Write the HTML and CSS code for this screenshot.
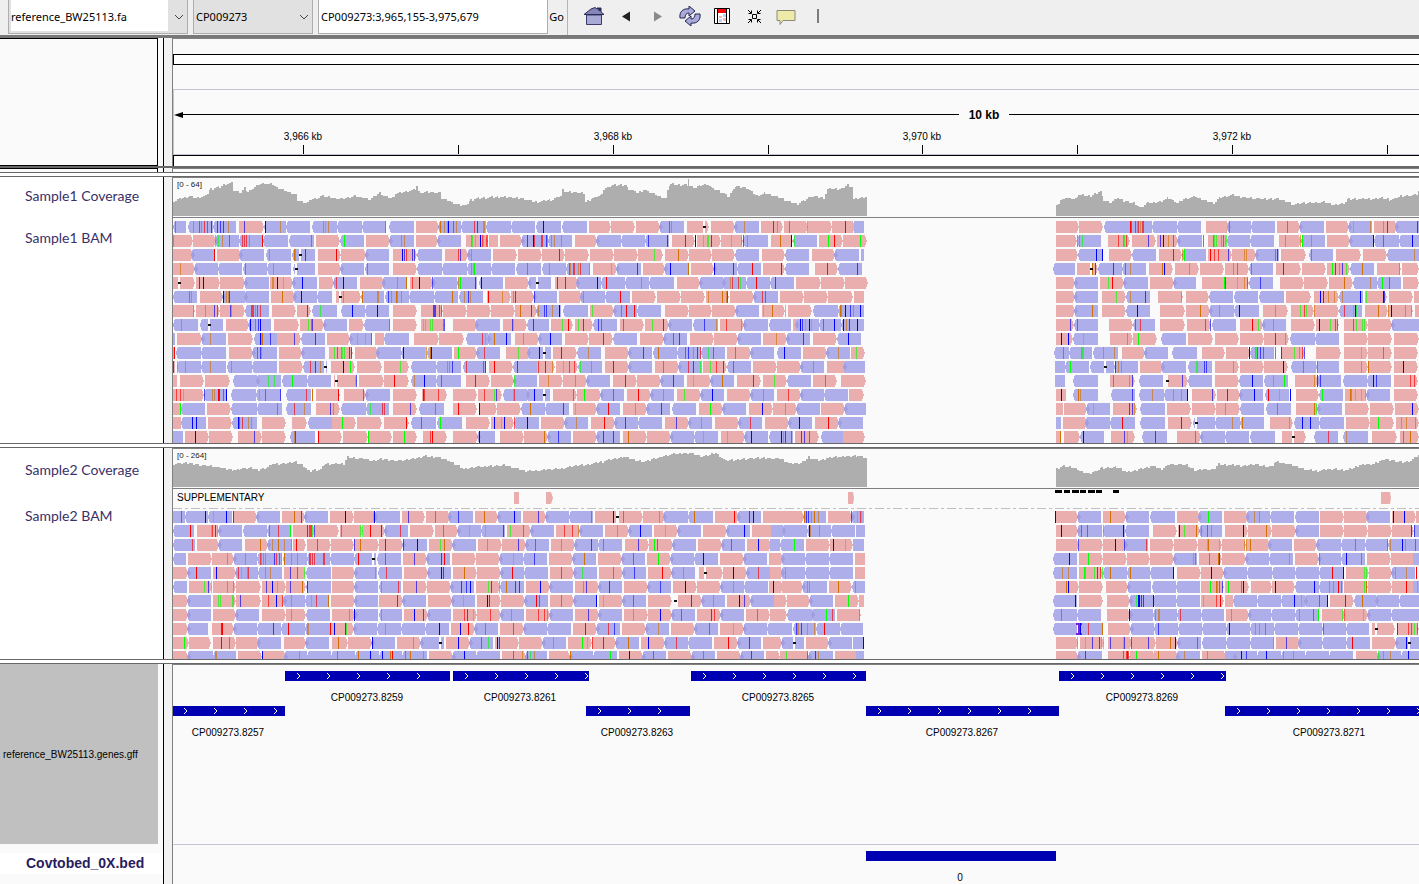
FILE: index.html
```html
<!DOCTYPE html>
<html lang="en">
<head>
<meta charset="utf-8">
<title>Genome viewer</title>
<link rel="stylesheet" href="styles.css">
</head>
<body>
<header class="toolbar">
  <div class="combo combo-genome">
    <select aria-label="Genome"><option>reference_BW25113.fa</option></select>
    <svg class="chev" width="10" height="6" viewBox="0 0 10 6"><path d="M1 1l4 4 4-4"/></svg>
  </div>
  <div class="combo combo-chrom">
    <select aria-label="Chromosome"><option>CP009273</option></select>
    <svg class="chev" width="10" height="6" viewBox="0 0 10 6"><path d="M1 1l4 4 4-4"/></svg>
  </div>
  <input class="locus" type="text" aria-label="Locus" value="CP009273:3,965,155-3,975,679">
  <button class="go" type="button">Go</button>
  <nav class="icons" aria-label="Tools">
    <button type="button" aria-label="Home"><svg width="22" height="20" viewBox="0 0 22 20"><path d="M3.500 9h15v9.500h-15z" fill="#a9a9d6" stroke="#3c3c6c"/><path d="M1 8.500L8 3l4-1.500 2 1.500V2h4v4l3 2.500z" fill="#8484b8" stroke="#2c2c58"/><path d="M14 2h4v3h-2z" fill="#2c2c58"/></svg></button>
    <button type="button" aria-label="Back"><svg width="22" height="20" viewBox="0 0 22 20"><path d="M7 10.500l8-5v10z" fill="#222"/></svg></button>
    <button type="button" aria-label="Forward"><svg width="22" height="20" viewBox="0 0 22 20"><path d="M15 10.500l-8-5v10z" fill="#8a8a8a"/></svg></button>
    <button type="button" aria-label="Refresh"><svg width="22" height="20" viewBox="0 0 22 20"><g fill="#a9a9dc" stroke="#26264e"><path d="M1 12C0 6 4 2 10 3V0l6 5-6 5V7C7 7 6 9 6 12z"/><path d="M21 8c1 6-3 10-9 9v3l-6-5 6-5v3c3 0 4-2 4-5z"/></g></svg></button>
    <button type="button" aria-label="Region of interest"><svg width="22" height="20" viewBox="0 0 22 20"><path d="M3.500 2.500h15v15h-15z" fill="#fff" stroke="#000"/><path d="M7 3h8v4H7z" fill="#f00"/><path d="M8 10h3v2H8zM12 12h3v3h-3z" fill="#f3b5b5"/><path d="M12 8h3v3h-3zM8 13h3v3H8z" fill="#c4cdf5"/><path d="M6.500 2v16M15.500 2v16" stroke="#000"/></svg></button>
    <button type="button" aria-label="Fit to window"><svg width="22" height="20" viewBox="0 0 22 20"><path d="M9.500 8.500h4v4h-4zM5 4l3 3M18 4l-3 3M5 17l3-3M18 17l-3-3M8.500 4.500v3h-3M14.500 4.500v3h3M8.500 16.500v-3h-3M14.500 16.500v-3h3" fill="none" stroke="#000"/></svg></button>
    <button type="button" aria-label="Popup text"><svg width="22" height="20" viewBox="0 0 22 20"><path d="M2 4.500h18v10H8l-3 4v-4H2z" fill="#eeeaa8" stroke="#8a8a7c"/></svg></button>
  </nav>
  <span class="bar"></span>
</header>
<main class="viewer">
  <section class="row row-header">
    <div class="names names-header"></div>
    <div class="strip"></div>
    <div class="data">
      <div class="ideogram"></div>
      <div class="ruler">
        <div class="span">
          <svg class="tip" width="10" height="6" viewBox="0 0 10 6"><path d="M0 3l6-2 3-1v6L6 5z"/></svg>
          <i class="rule"></i><b>10 kb</b><i class="rule"></i>
        </div>
        <svg class="chart ticks" id="ticks" height="26"></svg>
      </div>
      <div class="sequence"></div>
    </div>
  </section>
  <div class="split split-thick"></div>
  <section class="row row-attr">
    <div class="names names-attr"></div>
    <div class="strip"></div>
    <div class="data"></div>
  </section>
  <div class="split"></div>
  <section class="row row-one">
    <div class="names"><span class="name">Sample1 Coverage</span><span class="name">Sample1 BAM</span></div>
    <div class="strip"></div>
    <div class="data">
      <svg class="chart coverage" id="cov1" height="39"><text x="4" y="9">[0 - 64]</text></svg>
      <svg class="chart reads" id="reads1" height="226"></svg>
    </div>
  </section>
  <div class="split"></div>
  <section class="row row-two">
    <div class="names"><span class="name">Sample2 Coverage</span><span class="name">Sample2 BAM</span></div>
    <div class="strip"></div>
    <div class="data">
      <svg class="chart coverage" id="cov2" height="39"><text x="4" y="9">[0 - 264]</text></svg>
      <div class="supplementary"><span>SUPPLEMENTARY</span><svg class="chart supp" id="supp" height="20"></svg></div>
      <svg class="chart reads2" id="reads2" height="149"></svg>
    </div>
  </section>
  <div class="split"></div>
  <section class="row row-genes">
    <div class="names names-genes"><span class="file">reference_BW25113.genes.gff</span><span class="bed">Covtobed_0X.bed</span></div>
    <div class="strip"></div>
    <div class="data">
      <svg class="chart genes" id="genes" height="180"></svg>
      <svg class="chart" id="bed" height="39"><rect class="feature" x="693" y="6" width="190" height="10"/><text x="787" y="36" text-anchor="middle">0</text></svg>
    </div>
  </section>
</main>
<script src="tracks.js"></script>
</body>
</html>
```
FILE: styles.css
```css
* { box-sizing: border-box; }
body { margin: 0; min-height: 100vh; display: flex; flex-direction: column; background: #fafafa; font: 10px "Liberation Sans", Arial, sans-serif; color: #000; overflow: hidden; }
select, input, button { font: 11px "Noto Sans", sans-serif; color: #000; border-radius: 0; }

.toolbar { display: flex; align-items: stretch; height: 38px; padding: 0 0 0 8px; background: #efefef; border-bottom: 3px solid #787878; }
.combo { position: relative; margin: 0 5px 1px 0; }
.combo-genome { width: 180px; }
.combo-chrom { width: 120px; }
.combo select { width: 100%; height: 100%; padding: 0 2px; appearance: none; border: 1px solid #adadad; border-top: 0; background: #e1e1e1; }
.combo-genome select { background: linear-gradient(#fff, #fff) 2px 0 / 157px 31px no-repeat #e1e1e1; }
.chev { position: absolute; right: 4px; top: 14px; pointer-events: none; }
.chev path { fill: none; stroke: #444; }
.locus { width: 230px; margin: 0 0 1px; padding: 0 2px; border: 1px solid #adadad; border-top: 0; background: #fff; }
.go { width: 20px; padding: 0 2px 2px 0; border: 0; border-right: 1px solid #b4b4b4; background: #efefef; }
.icons { display: flex; margin-left: 10px; }
.icons button { width: 32px; padding: 0 0 3px; border: 0; background: none; display: flex; align-items: center; justify-content: center; }
.bar { width: 2px; height: 14px; margin: 9px 0 0 15px; background: #7c7c7c; }

.viewer { flex: 1; display: flex; flex-direction: column; }
.row { display: flex; }
.names { display: flex; flex-direction: column; width: 164px; flex: none; border-right: 1px solid #000; background: #fff; color: #3a3068; }
.strip { width: 8px; flex: none; background: #f2f2f2; }
.data { flex: 1; min-width: 0; overflow: hidden; border-left: 1px solid #808080; border-top: 1px solid #808080; }
.split { height: 5px; border: solid #686868; border-width: 1px 0; background: #fff; }
.split-thick { height: 2px; background: #686868; }

.names-header, .names-attr { padding-right: 5px; background: #fafafa; }
.names-header::before, .names-attr::before { content: ""; flex: 1; border: 1px solid #000; border-left: 0; }
.names-attr::before { border-bottom: 0; }
.row-header { height: 128px; }
.row-attr { height: 4px; }
.ideogram { height: 11px; margin-top: 15px; border: 1px solid #000; border-right: 0; background: #fff; }
.ruler { height: 66px; margin-top: 24px; border: solid #c4c4d4; border-width: 1px 0 1px 1px; }
.sequence { height: 11px; border: 1px solid #000; border-right: 0; border-bottom: 0; background: #fff; }
.span { display: flex; align-items: center; height: 39px; padding-top: 10px; font-size: 12px; }
.span .rule:first-of-type { flex: 0 0 776px; }
.rule { flex: 1; height: 1px; background: #000; }
.span b { flex: none; width: 50px; text-align: center; }
.tip { flex: none; margin-right: -1px; }

.chart { display: block; width: 100%; font: 10px "Liberation Sans", Arial, sans-serif; }
.ticks path { stroke: #000; }
.coverage { font-size: 8px; }
.coverage path { fill: #aeaeae; }
.coverage text { fill: #222; }
.reads { border-top: 1px solid #808080; }
.reads, .reads2 { shape-rendering: crispEdges; }
.fwd { fill: #ebaeae; }
.rev { fill: #aeaeeb; }
.overlap { fill: #9c96dc; opacity: .7; }
.base-a { fill: #0f0; }
.base-c { fill: #00f; }
.base-g { fill: #d17105; }
.base-t { fill: #f00; }
.weak { opacity: .65; }
.gap { fill: #fafafa; }
.ink { fill: #111; }
.insert { fill: #7a1ee0; }

.name { font: 14px/20px Lato, sans-serif; padding-left: 25px; }
.row-one .name:first-child { margin: 9px 0 22px; }
.row-two .name:first-child { margin: 12px 0 26px; }
.row-one { height: 266px; }
.row-two { height: 211px; }
.supplementary { display: flex; height: 21px; margin-bottom: 1px; border-top: 1px solid #808080; }
.supplementary span { flex: none; width: 100px; padding: 3px 0 0 4px; }
.supplementary .supp { flex: 1; width: auto; min-width: 0; overflow: visible; }
.dashes { stroke: #c0c0c0; stroke-dasharray: 9 3 3 3; }
.row-genes { flex: 1; }
.names-genes { background: #fafafa; }
.file { display: flex; align-items: center; width: 158px; height: 180px; padding-left: 3px; background: #c0c0c0; color: #000; }
.bed { margin-top: 9px; padding-left: 26px; background: #fff; font: bold 14px/21px "Liberation Sans", Arial, sans-serif; color: #281c60; }
.feature { fill: #0000b2; }
.arrows { fill: none; stroke: #fff; }
.genes { border-bottom: 1px solid #c4c4d4; }
```
FILE: tracks.js
```js
// Row notation: f/r start-end is a forward/reverse alignment, A C G T are
// mismatches (lower case: low base quality), D is a deletion, I an insertion.
const sample1 = [
`r0-13 G2 r15-40 g20 t26 g28 t31 t34 T38 r40-63 c44 c47 c50 g55 f66-91 c71 r91-113 C92 g107 r113-137 r139-164 g150 a152 g155 r164-189 r189-212 G212 r216-241 f243-266 r265-288 G267 g271 g274 C275 t280 g283 r288-313 t301 c304 g310 g311 r313-338 r338-362 r363-388 C370 r389-414 f416-438 f438-462 f463-487 r486-511 t496 g498 f514-536 D531 f538-562 r561-586 g571 f588-610 c600 g604 f611-635 G616 f635-659 g634 f659-682 T672 r681-691
f883-906 f906-930 r931-957 r957-979 T957 t958 t962 g964 t965 g967 t969 t970 r979-1004 r1004-1028 f1033-1056 r1054-1078 G1056 r1078-1102 f1104-1127 G1114 r1126-1151 f1153-1176 r1175-1199 a1180 g1197 f1201-1224 g1210 c1214 r1222-1246 T1244`,
`f0-20 A0 f20-43 r42-66 g42 a45 g49 t56 r66-90 t69 t71 t73 g76 T89 r90-115 r116-141 G138 f143-167 r167-191 A171 f193-217 r216-241 g228 g231 f243-265 r264-288 f293-315 A298 a299 a302 C307 t309 a310 t313 t314 f316-325 f327-349 r348-374 c354 C360 t361 t368 t369 c373 A374 r375-399 g378 g381 g388 f402-424 r423-448 r448-472 r472-496 c475 T494 f499-522 c512 C522 f524-548 a530 a534 a535 c538 f548-570 a558 g568 c570 r570-595 g574 f598-620 G607 C618 r620-644 a621 f646-670 A655 T661 f670-694 A687
f883-904 r904-928 A904 g906 a909 f935-957 t945 A950 a951 t953 f959-983 c975 f984-1005 c987 C990 g995 t1000 r1004-1029 G1030 f1035-1054 G1040 a1041 a1043 A1048 t1050 a1052 a1053 r1054-1077 r1077-1101 f1106-1128 g1112 r1128-1152 g1127 A1129 g1138 f1154-1177 r1176-1201 C1200 r1201-1226 t1210 r1226-1246 C1239`,
`f0-20 r18-42 T41 f44-68 r66-91 r93-118 g96 r119-142 G121 g122 D127 T132 f145-168 T163 f168-193 r192-216 f220-244 C229 c231 t233 c239 c241 r244-269 f272-295 t285 c287 r294-318 g298 f320-344 f345-369 f369-392 c386 f392-416 f417-441 f441-465 f465-490 a481 f492-516 G505 f516-539 f539-562 r562-586 f589-612 r612-636 f639-662 r661-686 r688-691
f883-905 r905-930 C923 C929 f936-959 r959-983 f986-1009 c1000 r1009-1033 g1009 A1011 f1035-1059 T1037 t1041 t1045 c1055 f1059-1083 g1071 g1073 r1082-1106 G1102 T1104 f1108-1133 r1136-1160 G1138 f1163-1188 f1190-1214 r1214-1238 r1238-1246 g1241`,
`f0-22 g7 r21-45 r45-69 r70-94 G72 r94-118 g100 r120-142 D123 f145-168 r167-191 r192-216 G194 f220-244 r244-269 r269-294 r294-318 g298 a300 A301 r318-342 r343-368 G354 r369-393 g376 r393-417 t396 g397 t400 t401 g405 t407 g416 f420-444 a438 r443-468 T464 f470-492 r491-516 C497 G515 f518-541 r540-564 C541 T560 r564-588 T579 f590-612 T608 r612-636 f642-665 c654 r665-689 T684
r880-902 f904-925 D918 G917 G919 c922 r925-949 T940 r949-973 t952 g957 f976-1000 G989 C991 f1002-1026 g1016 f1027-1051 f1052-1076 A1060 G1064 r1076-1100 G1078 f1103-1128 T1110 f1129-1153 f1154-1177 A1159 c1162 g1166 c1169 a1173 r1177-1201 G1189 f1204-1228 A1226 f1229-1246`,
`f0-22 D6 f23-47 T26 C30 f47-72 r71-96 f97-120 g99 g100 C104 a110 r119-144 C129 f146-161 r160-184 t163 C170 f187-211 r209-234 g224 G233 f237-260 t239 C246 c259 r259-284 r284-304 g285 A287 T302 r306-330 C308 f332-356 r355-378 D364 f382-405 c384 c392 r403-428 C424 r428-452 T433 r452-476 g468 r476-501 f504-527 r526-550 r549-573 g557 t559 t565 a567 r573-597 T583 r597-621 c602 f623-648 f648-672 f672-695
f883-902 r901-925 f927-951 a935 T939 r950-975 f977-1001 r1000-1023 f1029-1053 A1051 c1052 f1053-1076 a1064 g1071 t1074 r1076-1100 c1087 f1107-1131 f1131-1155 f1156-1180 G1171 r1180-1204 g1197 r1204-1228 A1209 t1216 f1230-1246`,
`r0-24 G16 g18 f27-50 r49-72 C50 g53 g55 c56 r71-96 f98-122 G109 r120-144 C128 r144-159 f163-166 D167 f168-188 g170 r188-211 G189 g204 g205 r212-236 c215 g218 G223 g224 g228 r236-261 r261-285 G279 r286-310 g291 c295 g297 f314-338 T315 g329 f338-361 g340 c342 r360-384 c361 f386-409 r407-432 g410 r432-457 T447 f459-483 f484-508 f508-532 f533-556 g535 G549 g553 c554 f557-581 r580-605 t589 t592 f607-631 f631-655 f655-680 f681-691
f883-902 r901-925 f929-953 a943 r953-977 g957 T972 f985-1010 g1008 f1013-1036 r1036-1060 r1061-1085 r1086-1111 f1113-1138 f1141-1166 C1147 T1150 g1155 g1161 r1166-1190 g1169 C1187 f1192-1214 a1193 C1210 c1211 f1216-1240 f1241-1246`,
`f0-22 A20 f23-47 g32 c41 t44 f47-72 c57 A58 r72-96 t78 t79 t80 g82 t84 t87 f99-123 f124-138 c134 r139-164 a147 r168-192 C179 r192-216 C204 f220-244 f248-270 c260 c261 c262 t266 t268 f270-294 f294-318 f318-342 f342-364 G347 c358 r363-388 g365 c371 c373 g379 C386 r390-415 f417-441 a419 r440-464 G448 T453 T461 r464-488 f492-516 f516-539 f539-563 r562-586 f589-612 a590 G599 a612 f615-639 r640-665 r665-691 G667 g668 C672 c677 g680 C687
f883-902 r901-925 G919 f929-953 r953-977 C964 f987-1012 f1013-1037 G1027 r1036-1061 g1046 r1061-1086 C1066 f1090-1115 A1102 f1118-1141 a1127 t1131 a1133 f1141-1166 g1141 r1166-1189 t1171 a1180 C1182 a1183 f1192-1215 G1205 f1215-1240 g1215 C1218 A1232 g1238 f1242-1246`,
`r0-25 g8 r27-50 A35 D36 f53-76 r75-98 C77 G82 c85 C87 f101-126 f127-151 a135 G138 c139 r150-174 f176-191 r191-216 G216 f220-244 f248-272 a250 a252 a257 a259 G270 c271 f280-304 r302-327 f330-354 c339 a340 r354-376 T360 f378-400 a389 T395 f402-420 a405 c410 r420-444 c425 t428 f447-471 t450 f472-496 a479 T490 r495-519 r520-545 c531 g543 f547-571 t553 g568 r570-595 r596-618 f620-642 r622-646 C627 c629 a632 C636 a638 r646-668 t650 C661 r668-691 C670 g673 c676 C684
f883-901 c897 r901-925 t904 f936-960 r960-982 t962 t967 f987-1012 f1014-1038 t1032 c1037 r1039-1063 f1067-1090 T1079 a1085 r1089-1113 g1100 f1118-1142 f1143-1166 C1146 a1157 t1162 t1164 f1171-1195 t1180 a1183 a1189 a1191 f1195-1219 r1218-1242 r1241-1246`,
`r0-2 f4-29 r28-53 g37 f55-80 r81-104 C87 g88 G89 c97 f104-128 c121 r128-152 T142 f154-177 r176-199 a184 a192 t198 f202-211 r211-236 f241-266 f266-291 r293-315 t309 a312 r314-338 G321 C333 f342-366 g350 r365-389 C377 f392-416 f416-440 c430 r440-464 f467-491 r490-514 t500 c506 f517-541 f541-565 r564-588 f590-614 g603 r613-637 T630 f640-664 r664-688 C675
f883-900 C888 C895 r900-925 a910 f937-960 A954 f960-984 A965 r988-1013 f1015-1040 f1042-1066 f1067-1091 f1091-1116 c1102 g1112 r1117-1142 r1142-1166 f1171-1195 f1195-1219 f1221-1246`,
`r0-2 T1 r3-28 r28-53 f56-80 r79-104 t84 c87 A88 f106-129 r128-152 f156-180 a161 t164 A168 a169 a171 c176 c178 f182-205 r203-228 r228-252 C230 f250-253 g253 r254-279 G257 C258 f281-304 A285 r303-327 t311 f333-357 a345 r354-378 C366 D371 f380-404 T388 r404-428 g415 f432-456 r455-479 c470 r480-504 G485 r504-528 t512 c515 g520 c524 t527 r528-552 a535 t540 f554-578 G562 r577-601 r604-628 C611 f630-654 r653-677 g665 f678-692 a683
r881-896 G890 r896-919 g908 a909 a910 r920-945 g930 g941 f949-972 r971-995 r999-1024 f1029-1052 f1053-1077 C1076 r1077-1101 A1082 a1083 t1084 c1087 t1090 G1102 f1108-1132 T1108 a1121 g1126 t1129 c1131 f1143-1168 f1171-1195 a1188 f1195-1219 G1210 f1221-1245`,
`f0-2 T0 r4-28 g4 A12 r28-53 g37 r54-79 g58 r79-104 f106-130 r130-154 t137 c142 g147 D152 f158-182 C170 A177 f184-209 f211-236 a227 r238-263 r263-288 g274 g276 c279 r290-313 t293 t310 T312 f316-340 T321 r340-364 c344 f358-382 t365 c372 g379 f383-405 a390 t396 t401 a407 r405-429 g418 f432-456 T440 r455-479 f482-506 G490 r505-529 t515 c520 a527 f530-554 a537 t543 c550 t560 r554-578 f580-604 f604-628 r627-651 g640 f654-678 r670-692
r882-892 r892-916 A897 r917-941 D932 r941-965 T942 g945 g948 f967-990 r988-1013 r1015-1039 a1023 a1024 c1031 c1033 f1042-1066 g1060 f1067-1091 f1091-1115 C1110 r1118-1143 G1130 r1143-1166 G1144 f1171-1195 g1188 f1195-1219 G1195 f1221-1245 C1230`,
`f0-4 f7-31 f32-57 r60-84 r83-108 a95 a101 r109-134 A119 r134-158 D163 f161-184 a182 c183 f186-211 f211-236 T221 r238-263 g241 C251 r263-288 t268 f293-317 c302 f318-341 r340-364 a341 f366-390 g375 f390-414 A402 r413-437 f440-464 c452 f464-488 r487-511 T500 f514-538 a520 r537-561 G549 f564-588 c580 f590-614 a601 r614-638 f640-664 G652 f668-693
r882-892 r900-925 f937-962 G940 g956 c959 r966-990 f993-1015 D994 c1009 r1015-1039 f1042-1066 r1066-1090 C1079 r1091-1115 A1100 A1111 f1122-1145 g1141 T1144 r1144-1168 c1147 r1170-1194 r1194-1218 C1200 c1203 f1221-1245 t1237 t1241`,
`f0-31 t3 t7 a10 r31-54 c31 g39 g41 T45 c46 t50 C53 r58-83 r83-108 a86 t92 c107 r113-138 t133 G139 f143-167 T165 f171-193 t190 r192-217 f220-244 f249-274 T250 t251 t265 f280-304 f305-329 t311 a321 c323 r330-354 a340 t341 r353-377 C361 D371 f380-404 G400 f404-428 A411 r427-451 t440 f454-478 T465 r477-501 g490 f504-528 a511 r527-551 C539 f554-578 r577-601 g590 f604-628 t615 r627-651 r651-675 f676-691
f883-893 C888 r900-925 G905 g907 r938-962 c959 r966-991 g979 r991-1014 g1000 g1008 C1014 f1019-1043 c1039 f1044-1067 T1054 r1066-1090 C1081 r1092-1116 T1095 a1106 C1117 f1123-1146 r1146-1170 A1149 f1172-1194 G1177 A1178 a1182 a1188 a1192 r1193-1217 f1221-1245`,
`f0-8 A7 r8-32 f34-58 r58-84 r84-109 G104 r113-138 t121 g131 f143-167 c157 g160 r168-193 r193-216 a197 t209 t211 f220-244 c237 r246-271 G262 f280-304 T285 f306-324 C306 f324-348 r348-372 G357 r372-396 c390 a402 f400-424 r423-447 T435 f450-474 g462 r473-497 c488 r499-523 f526-550 A537 r549-573 f576-600 C589 f600-624 g612 r623-647 f648-672 r671-693
f883-890 f891-914 r913-937 a920 f940-964 c956 c959 g961 r967-992 f994-1018 f1019-1043 f1043-1067 A1052 r1067-1091 r1093-1118 G1104 f1123-1145 G1141 a1143 r1144-1169 f1172-1196 f1197-1221 f1222-1246 C1239`,
`f0-8 r8-33 C19 C23 f35-59 r59-84 C65 t66 t69 g75 g78 f89-113 f119-134 r135-159 f159-183 A169 f184-209 f211-236 T233 r238-263 t248 r264-289 A267 f293-317 f318-341 C321 a328 C331 t341 r341-366 C354 f368-392 r391-415 g403 f418-442 T431 r441-465 c452 r465-489 f492-516 c503 r515-539 A528 f542-566 r565-589 t577 f592-616 r615-639 C626 f642-666 T655 r665-690
r883-888 f890-914 r912-937 r937-962 T949 r967-992 f995-1019 T1008 r1020-1042 D1023 r1042-1067 g1059 r1067-1091 G1069 f1097-1120 g1116 r1121-1146 C1129 C1137 r1146-1171 f1173-1197 f1197-1221 A1205 f1223-1246 g1228 g1233 g1242`,
`r0-10 f12-36 C22 f36-60 f65-89 c81 f89-113 r117-142 g121 c122 f145-169 T145 f170-195 A195 f195-219 f220-244 A231 f250-274 t257 T259 f280-305 r304-322 C306 f327-351 f351-375 G371 r374-398 c385 f400-424 r423-447 T430 c440 f450-474 G455 f474-498 r497-521 r521-545 a530 f548-572 a554 r571-595 C578 r596-620 C608 g610 c612 t618 f622-646 c628 c631 t636 r648-670 f668-692
f883-888 G887 f891-907 r907-931 C910 f938-962 c951 a954 r969-994 T982 f1004-1028 G1022 r1027-1052 r1052-1076 r1077-1102 f1109-1133 D1120 r1141-1165 t1155 r1170-1195 g1173 f1199-1224 f1227-1246 G1230 G1237`
];
const sample2 = [
`r0-12 t8 r12-35 C32 r35-59 a40 C53 f60-84 T60 r83-107 f109-132 G121 c128 r131-155 f157-181 C172 f181-202 r201-227 a200 C201 f229-252 c235 f253-277 G262 r275-300 c285 f302-325 G311 r324-348 C341 f350-373 c365 r372-396 r396-420 G418 f422-446 C440 D444 f446-470 G450 f470-492 A486 r490-515 r515-540 G521 f542-566 T561 r564-588 C580 c576 f590-611 f608-631 r630-653 G631 c633 c635 g638 G641 g645 f655-679 r678-691 c678 a684 t687 a688
f883-905 C882 r904-928 f930-953 G937 r952-976 r977-1002 f1004-1027 r1025-1049 A1035 f1051-1075 r1073-1097 g1081 g1086 r1097-1121 r1122-1146 f1147-1171 f1171-1195 r1193-1217 f1219-1243 C1220 C1231 f1243-1246`,
`r0-21 T17 f24-46 a38 t39 c42 a44 r45-69 r70-94 r94-118 G96 t105 A117 f120-142 c134 t136 t137 t138 a139 c141 f142-166 f167-190 G168 a187 a189 f190-212 T197 T208 r211-235 t227 f237-261 f262-285 G270 r284-308 a296 r308-332 a312 c330 a337 f334-358 G350 r357-381 f383-407 t391 t399 g405 r406-430 f432-456 g444 r455-479 C467 f481-505 a492 r504-528 f530-554 r553-577 C571 f579-600 r598-610 r609-634 r634-658 C636 g637 g646 r658-682 r683-692
f883-905 C888 r904-929 t908 t914 r930-952 g930 C950 r952-976 f980-1004 C1006 f1005-1027 a1011 G1023 r1026-1049 g1028 t1034 g1038 f1052-1075 C1070 f1075-1099 G1093 f1099-1123 r1122-1146 f1147-1171 f1171-1195 f1195-1219 f1219-1241 T1238 c1241 r1241-1246`,
`r0-22 t19 f24-46 r45-69 f72-95 G87 r94-118 g99 G105 g111 A118 f120-133 T123 f134-158 t144 f158-181 f181-206 c181 G187 f206-230 T212 c230 r229-254 C244 f256-280 a267 G271 r279-303 f305-329 g314 f329-353 c345 r352-376 t362 f378-402 A388 r401-425 c418 r425-449 G430 f452-476 c465 A481 t484 f476-500 r499-523 f525-549 r548-572 t558 f574-598 C585 r597-607 r607-631 A621 f633-657 f657-680 C660 a672 r680-691
f883-906 c905 f906-930 f930-953 C942 r951-975 c951 t973 f977-1001 f1001-1025 f1025-1049 a1034 G1035 a1046 f1049-1073 g1071 f1073-1097 g1073 G1077 r1095-1119 f1121-1144 r1143-1168 r1168-1192 G1182 r1192-1215 G1214 r1215-1239 g1217 C1229 A1232 r1238-1246 t1242`,
`r0-13 f15-39 f39-61 A54 r60-84 g72 r84-109 t87 g88 g90 g92 c101 t103 t106 a108 r110-134 G111 g118 g124 r134-157 t136 t137 t139 t141 t150 t151 r157-181 r181-203 T185 D200 r204-228 t212 f230-254 c241 r253-277 c268 T271 f279-303 f303-327 r326-350 a340 r350-374 c361 f376-400 r399-423 G411 f425-449 r448-472 t460 f474-498 A485 r497-521 r521-545 C530 f547-571 r570-594 f596-610 r608-632 r632-656 r656-680 f682-692
r880-904 C896 f906-930 A915 f930-954 f954-977 f977-1001 r1000-1024 A1020 G1022 f1026-1049 G1036 G1045 T1046 f1049-1073 r1072-1096 r1096-1120 A1116 f1122-1146 r1145-1168 G1146 r1168-1192 C1173 G1188 f1194-1218 f1218-1242 r1240-1246`,
`f0-15 r14-38 T23 f40-63 C43 r62-85 t65 a68 g74 t75 r85-109 g92 g97 f111-133 c117 t124 a131 r133-158 f159-182 r181-204 A202 r205-229 t213 f231-255 r254-278 C268 c270 f280-304 G291 f304-328 r327-351 T339 r351-375 f377-401 t388 r400-424 a409 f426-450 G440 r449-473 c461 f475-499 T489 r498-522 g510 D532 f526-550 f550-574 C560 r573-597 t585 f597-610 r608-632 A612 r632-656 r656-680 f682-692
r880-904 g889 g895 f906-930 A911 a912 a921 c924 t927 a929 r930-954 G937 r954-977 G957 r977-1001 C1000 f1004-1028 f1028-1051 C1038 r1050-1074 r1074-1099 r1099-1122 r1122-1146 r1146-1170 T1159 C1170 f1173-1196 a1191 a1193 f1196-1219 r1218-1242 A1222 g1233 T1243`,
`r0-14 f16-39 a31 c35 a38 f40-63 A54 A60 f63-88 f89-113 c93 C99 a104 f113-133 c117 G129 r133-158 T134 f159-182 r181-205 r206-228 g208 t225 f230-254 c243 f254-278 r277-301 T288 c293 C297 f303-327 a315 c318 g326 r327-351 G333 c342 T346 f353-377 C367 r376-400 f402-426 A410 c413 r425-449 T436 f451-475 r474-498 c487 f500-524 C512 f524-548 r547-571 A560 r571-595 f596-610 C600 f609-630 r629-654 g634 g636 f656-679 G665 r679-692 g682
f883-906 G893 C895 f906-930 f933-955 r954-978 r979-1003 r1003-1027 f1028-1051 A1037 G1043 g1044 t1046 c1049 f1052-1076 A1055 G1068 C1070 f1078-1099 f1099-1122 C1102 r1122-1146 C1141 r1146-1170 g1156 g1160 T1165 G1168 f1171-1195 a1191 G1193 f1195-1219 f1219-1242 T1233 r1240-1246 a1244`,
`f0-15 r14-38 f40-63 a45 a47 a59 a60 f63-88 c67 f89-112 t95 C103 t109 r110-132 A118 r132-156 a138 t143 G155 f158-182 r181-205 f206-230 c224 r229-253 f255-279 r278-302 a290 f304-328 C314 c316 f328-352 r351-375 T363 t366 f377-401 G388 r400-424 C423 a430 f426-450 r449-473 t460 f475-499 D502 f505-529 T518 r528-552 g540 f554-578 C566 c571 r577-601 f601-614 f614-637 r636-660 f662-686 A675 f686-691
r880-904 C902 f906-930 f934-957 r956-980 a963 C965 C966 c968 T970 r980-1003 C980 r1003-1027 f1028-1051 a1030 t1043 T1047 f1052-1060 r1060-1084 r1084-1108 r1108-1132 C1121 a1128 r1131-1155 t1146 C1154 f1157-1181 T1172 r1181-1203 G1189 r1202-1226 r1226-1246`,
`f0-15 r14-38 f40-63 r62-86 f89-113 f113-133 A118 r133-157 f159-182 A176 C181 r181-205 r206-229 g208 f231-255 C241 c250 r254-278 f280-304 t291 c294 a300 f304-328 t317 r327-351 g338 f353-377 t365 t371 A374 r376-400 f402-426 c415 r425-449 f451-475 g460 f475-499 C487 r498-522 t508 f524-548 c538 t541 r547-571 f573-597 G584 f597-614 r614-639 r638-662 A653 t659 f664-688 A686
r880-904 G888 r904-928 f934-957 C956 r956-980 r980-1004 g982 g985 g986 r1004-1028 t1007 r1028-1051 f1053-1076 A1058 r1075-1098 r1098-1122 r1122-1146 g1126 t1140 A1145 f1149-1172 a1169 t1171 f1172-1195 a1190 r1194-1218 r1218-1242 r1242-1246`,
`f0-15 r14-35 f39-61 c48 T49 r60-84 r84-108 T100 r108-132 T115 r132-157 g134 g135 f157-181 T157 C161 T172 a173 r180-204 r204-228 A212 r228-252 r252-276 C266 f278-302 C287 T295 r301-325 G312 f327-351 t340 r350-374 r374-398 f400-424 T412 r423-447 t435 c441 f449-473 r472-496 g485 f498-522 r521-545 t536 f547-571 a560 r570-594 r594-619 r620-643 c623 g624 g625 c628 A634 g641 r643-667 T651 r667-690
r880-904 I906 C907 t915 r906-929 G929 f935-958 r957-981 r981-1005 c985 r1005-1029 r1029-1053 r1053-1077 C1056 r1077-1101 g1082 g1086 G1092 r1101-1125 r1125-1149 r1149-1173 t1150 r1173-1196 f1199-1222 D1203 f1224-1246 T1224 t1235 t1238 a1241 t1244`,
`f0-16 A11 f16-38 f40-63 T48 G56 f63-86 r84-108 f111-133 r132-156 f159-175 G165 f175-199 r198-222 C199 f224-248 g240 r247-271 D267 f273-297 C285 r296-320 t308 a315 f322-346 r325-327 C324 c326 f346-370 r369-393 g380 f395-419 A409 a414 t419 f419-443 c430 r442-466 G455 f468-492 C475 r491-515 t503 r515-539 f541-565 T555 r564-588 c576 f590-609 r608-631 D621 f633-656 r655-679 r680-691 C690
f883-905 g904 f907-931 a912 c919 c926 a928 a930 f935-959 c937 a950 c951 c958 f959-983 c975 f983-1005 G997 C1002 r1004-1028 t1024 r1029-1053 r1053-1077 r1077-1101 A1100 f1103-1127 c1113 r1125-1149 r1149-1173 r1173-1197 T1179 f1199-1223 r1222-1246 C1233 D1236`,
`f0-15 r14-40 r40-63 g42 g43 f65-89 C89 f90-113 r111-134 g126 r134-158 r158-182 G164 r182-206 G185 C197 r206-229 C209 G217 T219 G232 r229-254 G237 g250 f256-280 C291 r279-303 r303-327 f329-353 t340 g349 t354 a357 g361 r352-374 f376-397 G397 r396-420 r420-444 A437 f446-470 C456 r469-493 t480 f495-519 r518-542 G530 f544-568 r567-591 c578 f593-607 f607-636 a613 t634 r635-660 T642 g645 f662-686 r683-691
f883-905 r904-929 c912 f935-957 t950 t953 T954 t955 f957-982 A963 f981-1005 G985 r1003-1027 g1011 f1029-1053 A1034 r1052-1062 r1060-1084 C1068 c1073 r1084-1108 C1093 r1108-1132 g1110 g1120 r1132-1156 r1156-1180 f1183-1206 r1204-1228 a1205 g1210 g1217 r1228-1246 C1235`
];

const NS = 'http://www.w3.org/2000/svg';
function add(svg, name, attrs, text) {
  const el = document.createElementNS(NS, name);
  for (const key in attrs) el.setAttribute(key, attrs[key]);
  if (text !== undefined) el.textContent = text;
  svg.appendChild(el);
}

function drawReads(id, rows, top) {
  const svg = document.getElementById(id);
  const layers = { fwd: '', rev: '', overlap: '' };
  const marks = {};
  const gaps = [];
  let insert = '';
  rows.forEach((row, i) => {
    const y = top + i * 14;
    let last = -9;
    for (const token of row.trim().split(/\s+/)) {
      const kind = token[0];
      const [a, b] = token.slice(1).split('-').map(Number);
      const tip = b - a > 12 ? 2 : 0;
      if (kind === 'f') {
        layers.fwd += `M${a} ${y}H${b - tip}L${b} ${y + 6}L${b - tip} ${y + 12}H${a}z`;
        last = b;
      } else if (kind === 'r') {
        layers.rev += `M${b} ${y}H${a + tip}L${a} ${y + 6}L${a + tip} ${y + 12}H${b}z`;
        if (last > a && tip) layers.overlap += `M${a} ${y + 6}L${a + 2} ${y + 2}L${a + 4} ${y + 6}L${a + 2} ${y + 10}z`;
        last = b;
      } else if (kind === 'D') {
        gaps.push([a, y]);
      } else if (kind === 'I') {
        insert += `M${a - 3} ${y}h6v2h-2v8h2v2h-6v-2h2v-8h-2z`;
      } else {
        marks[kind] = (marks[kind] || '') + `M${a} ${y}h1v12h-1z`;
      }
    }
  });
  for (const name in layers) add(svg, 'path', { class: name, d: layers[name] });
  if (insert) add(svg, 'path', { class: 'insert', d: insert });
  for (const base in marks) {
    const weak = base === base.toLowerCase() ? ' weak' : '';
    add(svg, 'path', { class: 'base-' + base.toLowerCase() + weak, d: marks[base] });
  }
  for (const [x, y] of gaps) {
    add(svg, 'rect', { class: 'gap', x: x - 1, y, width: 2, height: 12 });
    add(svg, 'rect', { class: 'ink', x: x - 1, y: y + 5, width: 3, height: 2 });
  }
}

function drawCoverage(id, base, blocks) {
  let d = '';
  for (const points of blocks) {
    d += `M${points[0][0]} ${base}`;
    for (let i = 0; i < points.length - 1; i++) {
      const [x0, h0] = points[i], [x1, h1] = points[i + 1];
      for (let x = x0; x < x1; x += 2) {
        const wobble = ((x * 7919) % 13) / 6 - 1;
        const h = Math.round(h0 + (h1 - h0) * (x - x0) / (x1 - x0) + wobble);
        d += `V${base - h}H${Math.min(x + 2, x1)}`;
      }
    }
    d += `V${base}z`;
  }
  add(document.getElementById(id), 'path', { d });
}

drawCoverage('cov1', 38, [
  [[0,15],[9,18],[16,20],[24,18],[32,20],[37,27],[46,29],[52,32],[58,33],[60,25],[67,23],[71,28],[74,24],[79,28],[85,32],[91,33],[99,31],[103,28],[112,25],[122,21],[124,16],[132,13],[139,17],[149,20],[159,18],[168,17],[181,20],[196,17],[206,23],[213,19],[220,18],[222,23],[234,25],[242,26],[243,30],[245,24],[266,23],[268,17],[276,15],[281,12],[292,10],[297,16],[306,18],[325,19],[347,18],[360,14],[377,16],[387,20],[389,26],[392,24],[410,23],[412,14],[419,18],[428,21],[430,27],[439,31],[452,31],[455,27],[464,23],[470,26],[480,22],[492,17],[494,27],[497,32],[514,31],[522,28],[527,31],[534,32],[539,27],[550,23],[555,19],[560,28],[563,30],[574,27],[583,20],[592,23],[605,19],[614,15],[624,12],[631,16],[637,20],[650,18],[654,27],[668,27],[674,31],[678,29],[680,17],[694,19]],
  [[883,10],[887,16],[892,18],[902,17],[905,21],[917,20],[927,25],[930,16],[937,14],[944,18],[950,15],[960,13],[967,8],[974,13],[984,14],[995,18],[1004,13],[1010,17],[1022,19],[1030,16],[1040,13],[1047,19],[1057,21],[1067,19],[1089,17],[1104,17],[1114,14],[1120,11],[1130,13],[1150,14],[1160,11],[1170,13],[1175,17],[1200,17],[1210,18],[1217,16],[1227,20],[1243,21],[1246,26]]
]);
drawCoverage('cov2', 38, [
  [[0,23],[14,24],[27,22],[37,21],[47,19],[60,17],[67,18],[77,19],[85,17],[94,20],[99,23],[110,23],[122,25],[130,21],[135,16],[147,18],[152,23],[170,23],[174,30],[190,28],[200,26],[207,28],[227,26],[250,31],[262,30],[275,26],[290,18],[305,20],[330,22],[350,16],[370,17],[390,19],[402,21],[427,25],[450,30],[470,25],[490,31],[500,33],[517,34],[528,30],[542,34],[552,26],[570,28],[590,29],[607,28],[617,23],[627,24],[635,30],[645,26],[654,29],[665,30],[684,31],[690,30],[694,27]],
  [[883,18],[890,21],[900,19],[915,13],[928,19],[943,20],[953,15],[963,17],[977,21],[988,18],[997,23],[1013,22],[1022,16],[1030,18],[1039,17],[1045,23],[1067,21],[1080,23],[1097,20],[1102,25],[1115,23],[1127,19],[1140,16],[1160,18],[1174,17],[1187,22],[1200,23],[1212,28],[1227,25],[1237,26],[1246,32]]
]);
add(document.getElementById('cov1'), 'path', { d: 'M515 1h1v20h-1z' });
drawReads('reads1', sample1, 3);
drawReads('reads2', sample2, 1);

// Supplementary alignments; the chart starts 100px right of the track edge.
const supp = document.getElementById('supp');
add(supp, 'path', { class: 'fwd', d: 'M241 3h5v12h-5zM273 3h5l2 6-2 6h-5zM575 3h5l1 6-1 6h-5zM1108 3h9l1 6-1 6h-9z' });
add(supp, 'path', { d: 'M782 1h7v3h-7zM791 1h6v3h-6zM799 1h7v3h-7zM807 1h6v3h-6zM815 1h7v3h-7zM823 1h6v3h-6zM840 1h6v3h-6z' });
add(supp, 'path', { class: 'dashes', d: 'M-100 19.5H3000' });

const ticks = document.getElementById('ticks');
[129, 284, 439, 594, 748, 903, 1058, 1213].forEach((x, i) => {
  add(ticks, 'path', { d: `M${x + 0.5} 16v9` });
  if (i % 2 === 0) add(ticks, 'text', { x, y: 11, 'text-anchor': 'middle' }, `3,${966 + i} kb`);
});

const genes = document.getElementById('genes');
[[-31, 112, 8257, 1, 55], [112, 277, 8259, 0, 194], [280, 416, 8261, 0, 347], [413, 517, 8263, 1, 464], [518, 693, 8265, 0, 605], [693, 886, 8267, 1, 789], [886, 1053, 8269, 0, 969], [1052, 1260, 8271, 1, 1156]].forEach(([start, end, id, lane, mid]) => {
  const y = 6 + lane * 35;
  add(genes, 'rect', { class: 'feature', x: start, y, width: end - start, height: 10 });
  let d = '';
  for (let x = start + 12; x <= end - 4; x += 30) d += `M${x} ${y + 2}l3 3-3 3`;
  add(genes, 'path', { class: 'arrows', d });
  add(genes, 'text', { x: mid, y: y + 30, 'text-anchor': 'middle' }, 'CP009273.' + id);
});
```
